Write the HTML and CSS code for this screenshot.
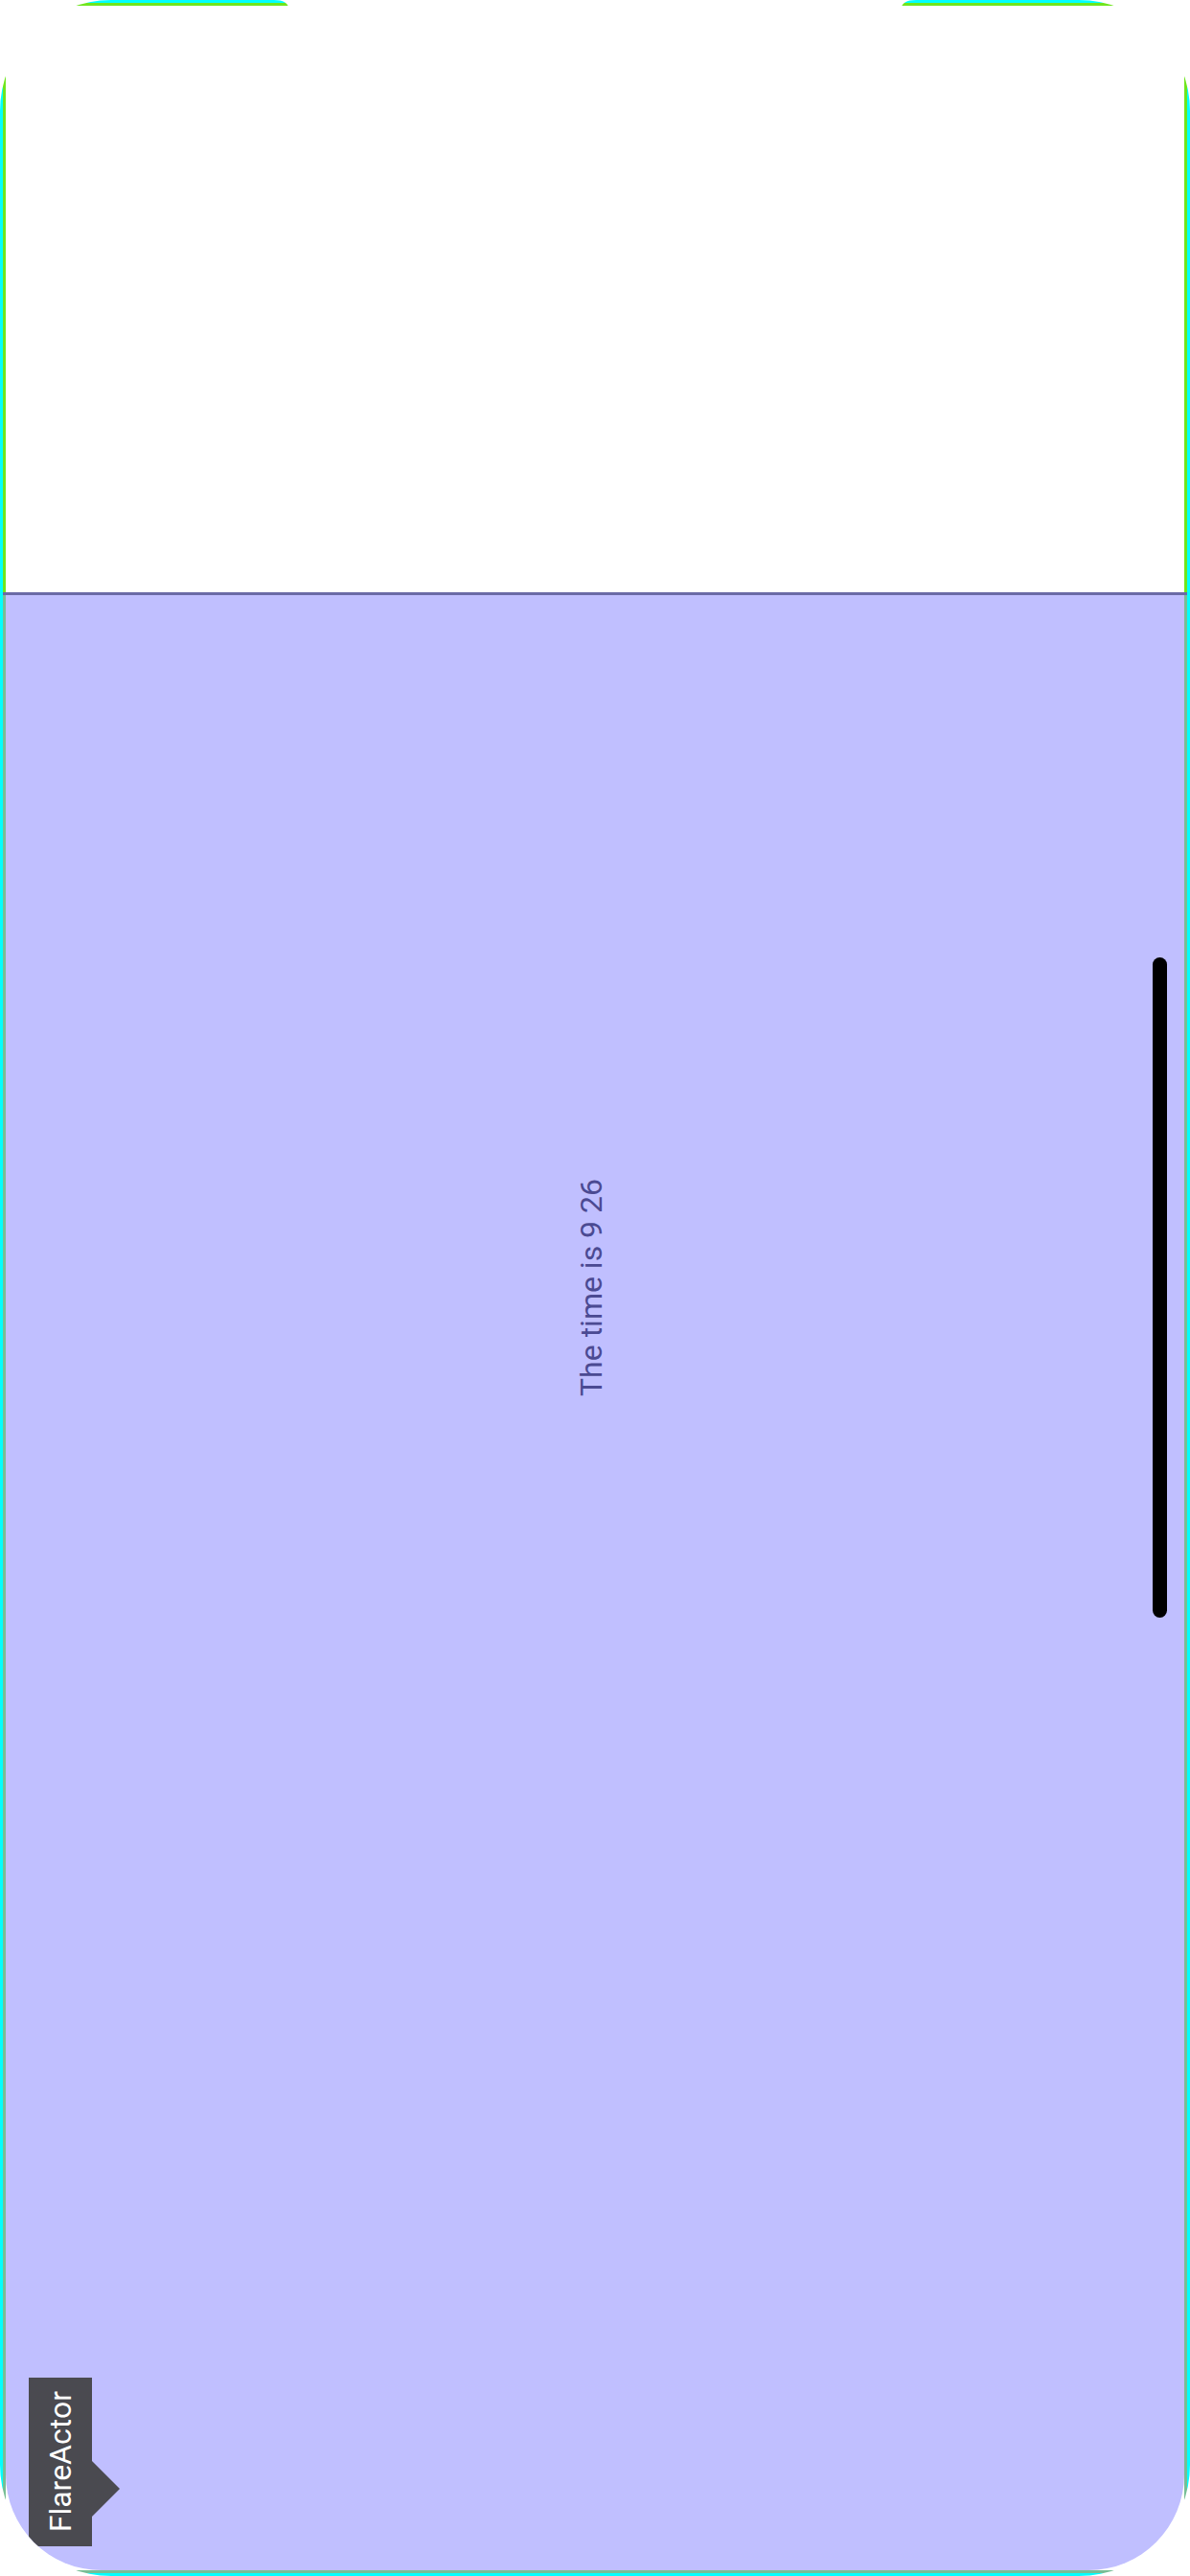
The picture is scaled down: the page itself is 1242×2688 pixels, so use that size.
FILE: index.html
```html
<!DOCTYPE html>
<html lang="en">
<head>
<meta charset="utf-8">
<title>Flare clock</title>
<link rel="stylesheet" href="styles.css">
</head>
<body>
<div class="screen">
  <div class="frame">
    <div class="top-panel"></div>
    <div class="divider"></div>
    <div class="bottom">
      <div class="stage">
        <div class="row">
          <span class="spacer"></span>
          <p class="time">The time is 9 26</p>
          <div class="bar-cell"><div class="bar"></div></div>
        </div>
        <div class="badge"><span class="badge-label">FlareActor</span></div>
      </div>
    </div>
  </div>
  <svg class="mask" width="1242" height="2688" viewBox="0 0 1242 2688" aria-hidden="true">
    <path fill="#ffffff" fill-rule="evenodd" d="M0 0H1242V2688H0Z M116 0H1126A116 116 0 0 1 1242 116V2572A116 116 0 0 1 1126 2688H116A116 116 0 0 1 0 2572V116A116 116 0 0 1 116 0Z M286 0C296 0 300 3 302 9L940 9C942 3 946 0 956 0Z"/>
  </svg>
</div>
</body>
</html>
```

FILE: styles.css
```css
html, body {
  margin: 0;
  padding: 0;
  background: #ffffff;
}

body {
  width: 1242px;
  height: 2688px;
  overflow: hidden;
  font-family: Roboto, "Liberation Sans", sans-serif;
}

.screen {
  position: relative;
  width: 1242px;
  height: 2688px;
  background: #ffffff;
}

.frame {
  box-sizing: border-box;
  height: 100%;
  border: 3px solid #00ffff;
  display: flex;
  flex-direction: column;
}

.top-panel {
  box-sizing: border-box;
  height: 615px;
  flex: none;
  border: 3px solid #70e61e;
  border-bottom: 0;
  background: #ffffff;
}

.divider {
  height: 3px;
  flex: none;
  background: #6b6ba6;
}

.bottom {
  flex: 1;
  box-sizing: border-box;
  border: 3px solid #78be96;
  border-top: 0;
  background: #ffffff;
  display: flex;
}

.stage {
  flex: 1;
  position: relative;
  overflow: hidden;
  background: #c0bfff;
  border-radius: 0 0 100px 100px;
  padding-top: 378px;
}

.row {
  height: 689px;
  display: grid;
  grid-template-columns: 1fr auto 1fr;
  align-items: center;
}

.time {
  margin: 0;
  padding-left: 8px;
  writing-mode: vertical-rl;
  transform: rotate(180deg);
  font-family: Roboto, "Liberation Sans", sans-serif;
  font-size: 32px;
  line-height: 1;
  color: #4b4a92;
  white-space: nowrap;
}

.bar-cell {
  justify-self: end;
  height: 100%;
  padding-right: 18px;
}

.bar {
  width: 15px;
  height: 100%;
  background: #000000;
  border-radius: 8px;
}

.badge {
  position: absolute;
  left: 24px;
  bottom: 25px;
  width: 66px;
  height: 176px;
  background: #4a4a50;
  display: flex;
  align-items: center;
  justify-content: center;
}

.badge::after {
  content: "";
  position: absolute;
  left: 100%;
  top: 87px;
  width: 0;
  height: 0;
  border-left: 29px solid #4a4a50;
  border-top: 29.5px solid transparent;
  border-bottom: 29.5px solid transparent;
}

.badge-label {
  writing-mode: vertical-rl;
  transform: rotate(180deg);
  color: #ffffff;
  font-family: Roboto, "Liberation Sans", sans-serif;
  font-size: 32px;
  line-height: 1;
  white-space: nowrap;
}

.mask {
  position: absolute;
  left: 0;
  top: 0;
  pointer-events: none;
}
```
